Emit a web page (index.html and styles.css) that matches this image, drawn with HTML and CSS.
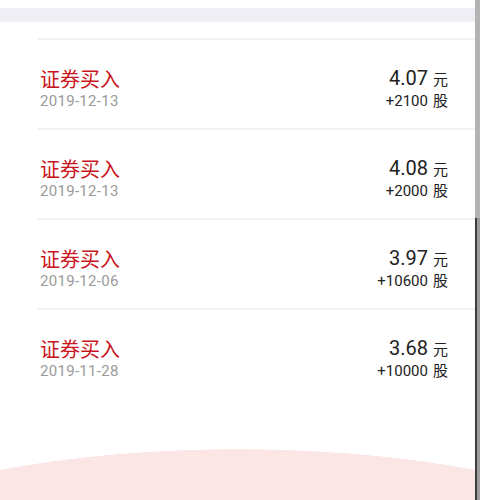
FILE: index.html
```html
<!DOCTYPE html>
<html lang="zh-CN">
<head>
  <meta charset="UTF-8">
  <meta name="viewport" content="width=device-width, initial-scale=1.0">
  <title>成交记录</title>
  <link rel="stylesheet" href="styles.css">
</head>
<body>
<div class="page">
  <div class="main">
    <div class="top-band"></div>
    <div class="list-head"></div>

    <div class="trade">
      <div class="trade-left">
        <div class="trade-type">证券买入</div>
        <div class="trade-date">2019-12-13</div>
      </div>
      <div class="trade-right">
        <div class="trade-price">4.07<span class="unit">元</span></div>
        <div class="trade-qty">+2100<span class="unit">股</span></div>
      </div>
    </div>

    <div class="trade">
      <div class="trade-left">
        <div class="trade-type">证券买入</div>
        <div class="trade-date">2019-12-13</div>
      </div>
      <div class="trade-right">
        <div class="trade-price">4.08<span class="unit">元</span></div>
        <div class="trade-qty">+2000<span class="unit">股</span></div>
      </div>
    </div>

    <div class="trade">
      <div class="trade-left">
        <div class="trade-type">证券买入</div>
        <div class="trade-date">2019-12-06</div>
      </div>
      <div class="trade-right">
        <div class="trade-price">3.97<span class="unit">元</span></div>
        <div class="trade-qty">+10600<span class="unit">股</span></div>
      </div>
    </div>

    <div class="trade last">
      <div class="trade-left">
        <div class="trade-type">证券买入</div>
        <div class="trade-date">2019-11-28</div>
      </div>
      <div class="trade-right">
        <div class="trade-price">3.68<span class="unit">元</span></div>
        <div class="trade-qty">+10000<span class="unit">股</span></div>
      </div>
    </div>

    <div class="footer-arc"></div>
  </div>
  <div class="scrollbar">
    <div class="thumb"></div>
    <div class="track"></div>
  </div>
</div>
</body>
</html>
```

FILE: styles.css
```css
html, body { margin: 0; padding: 0; background: #fff; }
body { font-family: Roboto, "Noto Sans CJK SC", sans-serif; width: 480px; height: 500px; overflow: hidden; }

.page { display: flex; height: 500px; }
.main { flex: 1; display: flex; flex-direction: column; }

.top-band { height: 14px; margin-top: 8px; background: #efeef4; }
.list-head { height: 16px; margin-left: 38px; border-bottom: 2px solid #f1f1f1; }

.trade {
    height: 78px;
    margin-left: 38px;
    padding: 10px 27px 0 2px;
    display: flex;
    justify-content: space-between;
    align-items: center;
    border-bottom: 2px solid #f1f1f1;
}
.trade.last { border-bottom: none; }

.trade-type { color: #c9141c; font-size: 20px; line-height: 24px; font-family: "Noto Sans CJK SC", sans-serif; }
.trade-date { color: #9a9a9a; font-size: 15px; line-height: 20px; letter-spacing: 0.3px; }

.trade-right { text-align: right; }
.trade-price { color: #222; font-size: 20px; line-height: 23px; }
.trade-qty { color: #222; font-size: 15px; line-height: 20px; }
.unit { font-family: "Noto Sans CJK SC", sans-serif; font-size: 15px; margin-left: 5px; }

.footer-arc {
    flex: 1;
    background: radial-gradient(ellipse 480px 157px at 50% 157px, #fbe5e5 99.6%, #fff 100%);
    margin-top: 51px;
}

.scrollbar { width: 5px; display: flex; flex-direction: column; }
.thumb { height: 218px; background: #b3b3b3; }
.track { flex: 1; background: linear-gradient(to right, #3c3c3c 0 2px, #9d9d9d 2px); }
```
